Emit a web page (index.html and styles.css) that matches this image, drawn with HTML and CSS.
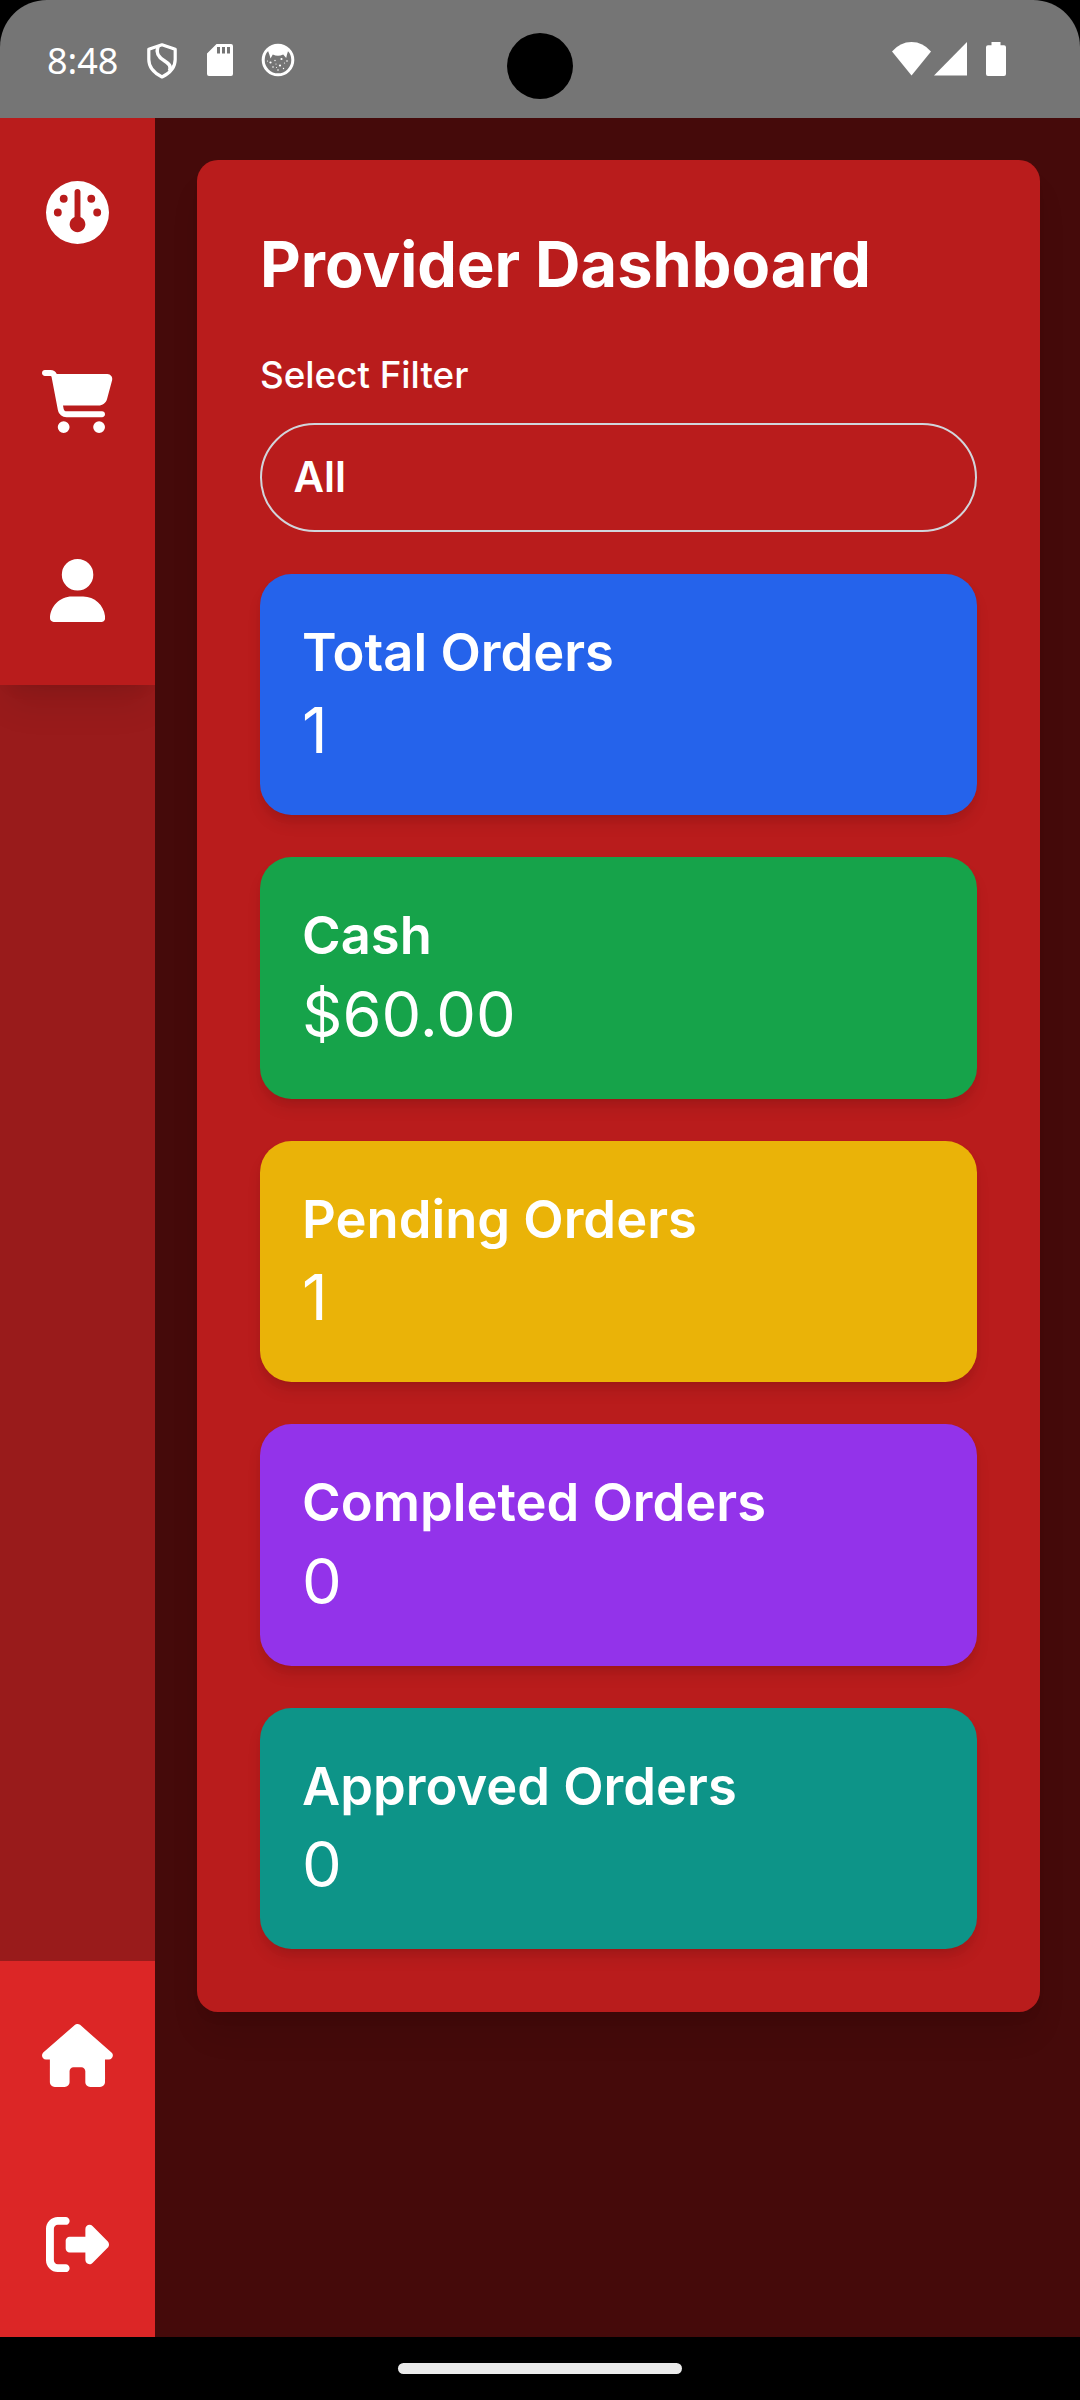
FILE: index.html
```html
<!DOCTYPE html>
<html lang="en">
<head>
<meta charset="utf-8">
<title>Provider Dashboard</title>
<link rel="stylesheet" href="styles.css">
</head>
<body>
<div class="phone">
  <header class="status">
    <div class="status-bar">
      <span class="clock">8:48</span>
      <svg class="ic-shield" viewBox="0 0 30 36" width="30" height="36" fill="none" stroke="#fff" stroke-linejoin="round">
        <path d="M15 1.800 28.200 6.300v10.200c0 7.500-5 13.500-13.200 17.500C7 30 1.800 24 1.800 16.500V6.300z" stroke-width="3.200"/>
        <path d="M11 3.500C8.500 11 12 14.500 17 17.500c5 3.200 7.500 5.500 5.500 10.500" stroke-width="3.600"/>
      </svg>
      <svg class="ic-sd" viewBox="0 0 26 32" width="26" height="32">
        <path fill="#fff" fill-rule="evenodd" d="M9.500 0H24a2 2 0 0 1 2 2v28a2 2 0 0 1-2 2H2a2 2 0 0 1-2-2V9.500zM10 3v6.500h3V3zm5 0v6.500h3V3zm5 0v6.500h3V3z"/>
      </svg>
      <svg class="ic-cat" viewBox="0 0 34 34" width="34" height="34">
        <circle cx="17" cy="17" r="14.800" fill="none" stroke="#fff" stroke-width="3"/>
        <path fill="#fff" d="M6.500 6.500Q17-1 27.500 6.500L26 11.500l-.8 3.500-3-3.500q-5.200 2.500-10.400 0L9.500 15.500 8.500 12z"/>
        <g fill="#fff">
          <circle cx="9.500" cy="19.500" r="1.100"/><circle cx="20.500" cy="16" r="1.100"/><circle cx="19" cy="22.500" r="1.100"/>
          <circle cx="14" cy="17.500" r=".7"/><circle cx="26" cy="18" r=".8"/><circle cx="12" cy="24" r=".8"/>
          <circle cx="15" cy="21" r=".6"/><circle cx="23.500" cy="20" r=".6"/><circle cx="17" cy="27" r=".8"/>
          <circle cx="22.500" cy="25.500" r=".7"/><circle cx="6.500" cy="18" r=".6"/><circle cx="15.500" cy="24.500" r=".5"/>
        </g>
      </svg>
      <svg class="ic-wifi" viewBox="0 0 39 34" width="39" height="34"><path fill="#fff" d="M0 9.500Q8 0 19.500 0T39 9.500L19.500 33.500z"/></svg>
      <svg class="ic-signal" viewBox="0 0 33 34" width="33" height="34"><path fill="#fff" d="M33 0v33.500H0z"/></svg>
      <svg class="ic-battery" viewBox="0 0 20 34" width="20" height="34"><path fill="#fff" d="M5.500 0h9v3.300H18a2 2 0 0 1 2 2V32a2 2 0 0 1-2 2H2a2 2 0 0 1-2-2V5.300a2 2 0 0 1 2-2h3.500z"/></svg>
    </div>
    <div class="camera"></div>
  </header>

  <div class="app">
    <nav class="sidebar">
      <div class="menu menu-top">
        <a class="item"><svg class="icon" viewBox="0 0 512 512"><path d="M0 256a256 256 0 1 1 512 0A256 256 0 1 1 0 256zm320 96c0-26.900-16.500-49.900-40-59.300V88c0-13.300-10.700-24-24-24s-24 10.700-24 24V292.700c-23.500 9.500-40 32.500-40 59.300c0 35.300 28.700 64 64 64s64-28.700 64-64zM144 176a32 32 0 1 0 0-64 32 32 0 1 0 0 64zm-16 80a32 32 0 1 0 -64 0 32 32 0 1 0 64 0zm288 32a32 32 0 1 0 0-64 32 32 0 1 0 0 64zM400 144a32 32 0 1 0 -64 0 32 32 0 1 0 64 0z"/></svg></a>
        <a class="item"><svg class="icon" viewBox="0 0 576 512"><path d="M0 24C0 10.700 10.700 0 24 0H69.500c22 0 41.500 12.800 50.600 32h411c26.300 0 45.500 25 38.600 50.400l-41 152.300c-8.500 31.400-37 53.300-69.500 53.300H170.700l5.400 28.500c2.200 11.300 12.100 19.500 23.600 19.500H488c13.300 0 24 10.700 24 24s-10.700 24-24 24H199.700c-34.600 0-64.300-24.600-70.700-58.500L77.400 54.500c-.7-3.800-4-6.500-7.900-6.500H24C10.700 48 0 37.300 0 24zM128 464a48 48 0 1 1 96 0 48 48 0 1 1 -96 0zm336-48a48 48 0 1 1 0 96 48 48 0 1 1 0-96z"/></svg></a>
        <a class="item"><svg class="icon" viewBox="0 0 448 512"><path d="M224 256A128 128 0 1 0 224 0a128 128 0 1 0 0 256zm-45.700 48C79.800 304 0 383.800 0 482.300C0 498.700 13.300 512 29.700 512H418.300c16.400 0 29.700-13.300 29.700-29.700C448 383.800 368.200 304 269.700 304H178.300z"/></svg></a>
      </div>
      <div class="menu menu-bottom">
        <a class="item"><svg class="icon" viewBox="0 0 576 512"><path d="M575.800 255.500c0 18-15 32.100-32 32.100h-32l.7 160.200c0 2.700-.2 5.400-.5 8.100V472c0 22.100-17.900 40-40 40H456c-1.100 0-2.200 0-3.300-.1c-1.400 .1-2.800 .1-4.200 .1H416 392c-22.100 0-40-17.900-40-40V448 384c0-17.700-14.300-32-32-32H256c-17.700 0-32 14.300-32 32v64 24c0 22.100-17.900 40-40 40H160 128.100c-1.500 0-3-.1-4.500-.2c-1.200 .1-2.400 .2-3.600 .2H104c-22.100 0-40-17.900-40-40V360c0-.9 0-1.900 .1-2.800V287.600H32c-18 0-32-14-32-32.100c0-9 3-17 10-24L266.400 8c7-7 15-8 22-8s15 2 21 7L564.800 231.500c8 7 12 15 11 24z"/></svg></a>
        <a class="item"><svg class="icon" viewBox="0 0 512 512"><path d="M377.900 105.900L500.700 228.700c7.200 7.200 11.300 17.100 11.300 27.300s-4.100 20.100-11.300 27.300L377.900 406.100c-6.400 6.400-15 9.900-24 9.900c-18.700 0-33.900-15.200-33.900-33.900l0-62.100-128 0c-17.700 0-32-14.300-32-32l0-64c0-17.700 14.300-32 32-32l128 0 0-62.100c0-18.700 15.200-33.900 33.900-33.900c9 0 17.600 3.600 24 9.900zM160 96L96 96c-17.700 0-32 14.300-32 32l0 256c0 17.700 14.300 32 32 32l64 0c17.700 0 32 14.300 32 32s-14.300 32-32 32l-64 0c-53 0-96-43-96-96L0 128C0 75 43 32 96 32l64 0c17.700 0 32 14.300 32 32s-14.300 32-32 32z"/></svg></a>
      </div>
    </nav>
    <main class="content">
      <section class="panel">
        <h1 class="title">Provider Dashboard</h1>
        <div class="label">Select Filter</div>
        <div class="select">All</div>
        <div class="cards">
          <article class="card blue"><h2>Total Orders</h2><p>1</p></article>
          <article class="card green"><h2>Cash</h2><p>$60.00</p></article>
          <article class="card yellow"><h2>Pending Orders</h2><p>1</p></article>
          <article class="card purple"><h2>Completed Orders</h2><p>0</p></article>
          <article class="card teal"><h2>Approved Orders</h2><p>0</p></article>
        </div>
      </section>
    </main>
  </div>
  <footer class="gesture"><div class="pill"></div></footer>
</div>
</body>
</html>
```
FILE: styles.css
```css
* { box-sizing: border-box; margin: 0; padding: 0; }
body { background: #000; }
.phone {
  width: 1080px;
  height: 2400px;
  display: flex;
  flex-direction: column;
  overflow: hidden;
  background: #000;
  color: #fff;
  font-family: Inter, sans-serif;
}

/* System status bar */
.status { position: relative; height: 118px; flex: none; }
.status-bar {
  height: 118px;
  padding: 0 74px 0 47px;
  display: flex;
  align-items: flex-start;
  background: #757575;
  border-radius: 47px 47px 0 0;
}
.clock { width: 100px; margin-top: 39px; font: 400 36px/44px "Noto Sans", sans-serif; }
.ic-shield { margin-top: 43px; }
.ic-sd { margin: 44px 0 0 30px; }
.ic-cat { margin: 43px 0 0 28px; }
.ic-wifi { margin: 42px 0 0 auto; }
.ic-signal { margin: 42px 0 0 3px; }
.ic-battery { margin: 42px 0 0 19px; }
.camera {
  position: absolute;
  left: 507px;
  top: 33px;
  width: 66px;
  height: 66px;
  border-radius: 50%;
  background: #000;
}

.app { flex: 1; min-height: 0; display: flex; overflow: hidden; background: #450a0a; }

/* Sidebar */
.sidebar {
  width: 155px;
  flex: none;
  display: flex;
  flex-direction: column;
  justify-content: space-between;
  background: #991b1b;
  overflow: hidden;
}
.menu-top {
  background: #b91c1c;
  box-shadow: 0 26.25px 34px -7.9px rgba(0, 0, 0, .1), 0 10.5px 15.75px -10.5px rgba(0, 0, 0, .1);
}
.menu-bottom { height: 376px; background: #dc2626; }
.item { height: 189px; display: flex; align-items: center; justify-content: center; }
.icon { height: 63px; fill: #fff; }

/* Main panel */
.content { flex: 1; padding: 42px 40px 0 42px; }
.panel {
  padding: 63px;
  border-radius: 21px;
  background: #b91c1c;
  box-shadow: 0 26.25px 34px -7.9px rgba(0, 0, 0, .1), 0 10.5px 15.75px -10.5px rgba(0, 0, 0, .1);
}
.title { margin-bottom: 44px; font-size: 63px; line-height: 82px; font-weight: 700; }
.label { margin-bottom: 21px; font-size: 36.75px; line-height: 52.5px; font-weight: 500; }
.select {
  height: 109px;
  margin-bottom: 42px;
  padding: 0 31.5px;
  border: 2px solid #d1d5db;
  border-radius: 55px;
  font-size: 42px;
  line-height: 104px;
  font-weight: 600;
}
.cards { display: flex; flex-direction: column; gap: 42px; }
.card {
  height: 241.5px;
  padding: 42px;
  border-radius: 31.5px;
  box-shadow: 0 10.5px 15.75px -2.6px rgba(0, 0, 0, .1), 0 5.25px 10.5px -5.25px rgba(0, 0, 0, .1);
}
.card h2 { font-size: 52.5px; line-height: 73.5px; font-weight: 600; }
.card p { font-size: 63px; line-height: 82px; }
.blue { background: #2563eb; }
.green { background: #16a34a; }
.yellow { background: #eab308; }
.purple { background: #9333ea; }
.teal { background: #0d9488; }

/* Gesture bar */
.gesture { height: 63px; flex: none; display: flex; align-items: center; justify-content: center; background: #000; }
.pill { width: 284px; height: 11px; border-radius: 5.5px; background: #ebebeb; }
```
